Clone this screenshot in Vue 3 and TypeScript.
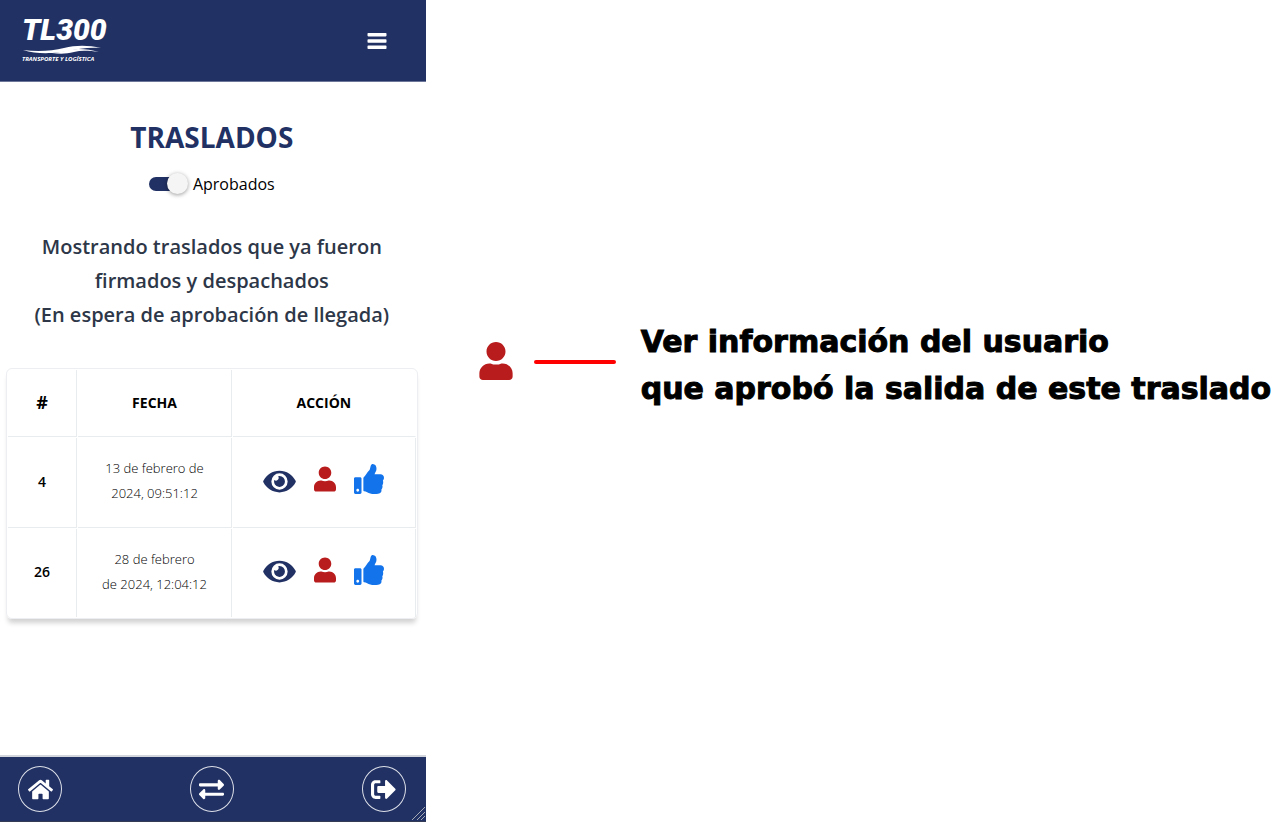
<script setup lang="ts">
interface Transfer {
  id: number
  date: string[]
}

interface NavItem {
  label: string
  viewBox: string
  path: string
}

const transfers: Transfer[] = [
  { id: 4, date: ['13 de febrero de', '2024, 09:51:12'] },
  { id: 26, date: ['28 de febrero', 'de 2024, 12:04:12'] },
]

const eyePath =
  'M572.52 241.4C518.29 135.59 410.93 64 288 64S57.68 135.64 3.48 241.41a32.35 32.35 0 0 0 0 29.19C57.71 376.41 165.07 448 288 448s230.32-71.64 284.52-177.41a32.35 32.35 0 0 0 0-29.19zM288 400a144 144 0 1 1 144-144 143.93 143.93 0 0 1-144 144zm0-240a95.31 95.31 0 0 0-25.31 3.79 47.85 47.85 0 0 1-66.9 66.9A95.78 95.78 0 1 0 288 160z'
const userPath =
  'M224 256c70.7 0 128-57.3 128-128S294.7 0 224 0 96 57.3 96 128s57.3 128 128 128zm89.6 32h-16.7c-22.2 10.2-46.9 16-72.9 16s-50.6-5.8-72.9-16h-16.7C60.2 288 0 348.2 0 422.4V464c0 26.5 21.5 48 48 48h352c26.5 0 48-21.5 48-48v-41.6c0-74.2-60.2-134.4-134.4-134.4z'
const thumbPath =
  'M104 224H24c-13.255 0-24 10.745-24 24v240c0 13.255 10.745 24 24 24h80c13.255 0 24-10.745 24-24V248c0-13.255-10.745-24-24-24zM64 472c-13.255 0-24-10.745-24-24s10.745-24 24-24 24 10.745 24 24-10.745 24-24 24zM384 81.452c0 42.416-25.97 66.208-33.277 94.548h101.723c33.397 0 59.397 27.746 59.553 58.098.084 17.938-7.546 37.249-19.439 49.197l-.11.11c9.836 23.337 8.237 56.037-9.308 79.469 8.681 25.895-.069 57.704-16.382 74.757 4.298 17.598 2.244 32.575-6.148 44.632C440.202 511.587 389.616 512 346.839 512l-2.845-.001c-48.287-.017-87.806-17.598-119.56-31.725-15.957-7.099-36.821-15.887-52.651-16.178-6.54-.12-11.783-5.457-11.783-11.998v-213.77c0-3.2 1.282-6.271 3.558-8.521 39.614-39.144 56.648-80.587 89.117-113.111 14.804-14.832 20.188-37.236 25.393-58.902C282.515 39.293 291.817 0 312 0c24 0 72 8 72 81.452z'

const navItems: NavItem[] = [
  {
    label: 'Inicio',
    viewBox: '0 0 576 512',
    path: 'M280.37 148.26L96 300.11V464a16 16 0 0 0 16 16l112.06-.29a16 16 0 0 0 15.92-16V368a16 16 0 0 1 16-16h64a16 16 0 0 1 16 16v95.64a16 16 0 0 0 16 16.05L464 480a16 16 0 0 0 16-16V300L295.67 148.26a12.19 12.19 0 0 0-15.3 0zM571.6 251.47L488 182.56V44.05a12 12 0 0 0-12-12h-56a12 12 0 0 0-12 12v72.61L318.47 43a48 48 0 0 0-61 0L4.34 251.47a12 12 0 0 0-1.6 16.9l25.5 31A12 12 0 0 0 45.15 301l235.22-193.74a12.19 12.19 0 0 1 15.3 0L530.9 301a12 12 0 0 0 16.9-1.6l25.5-31a12 12 0 0 0-1.7-16.93z',
  },
  {
    label: 'Traslados',
    viewBox: '0 0 512 512',
    path: 'M0 168v-16c0-13.255 10.745-24 24-24h360V80c0-21.367 25.899-32.042 40.971-16.971l80 80c9.372 9.373 9.372 24.569 0 33.941l-80 80C409.956 271.982 384 261.456 384 240v-48H24c-13.255 0-24-10.745-24-24zm488 152H128v-48c0-21.314-25.862-32.08-40.971-16.971l-80 80c-9.372 9.373-9.372 24.569 0 33.941l80 80C102.057 463.997 128 453.437 128 432v-48h360c13.255 0 24-10.745 24-24v-16c0-13.255-10.745-24-24-24z',
  },
  {
    label: 'Salir',
    viewBox: '0 0 512 512',
    path: 'M497 273L329 441c-15 15-41 4.5-41-17v-96H152c-13.3 0-24-10.7-24-24v-96c0-13.3 10.7-24 24-24h136V88c0-21.4 25.9-32 41-17l168 168c9.3 9.4 9.3 24.6 0 34zM192 436v-40c0-6.6-5.4-12-12-12H96c-17.7 0-32-14.3-32-32V160c0-17.7 14.3-32 32-32h84c6.6 0 12-5.4 12-12V76c0-6.6-5.4-12-12-12H96c-53 0-96 43-96 96v192c0 53 43 96 96 96h84c6.6 0 12-5.4 12-12z',
  },
]
</script>

<template>
  <div class="page">
    <section class="app">
      <header class="topbar">
        <a href="#" class="brand">
          <span class="brand-name">TL300</span>
          <svg class="brand-wave" viewBox="0 0 80 9" aria-hidden="true">
            <path d="M1 5C16 7 30 6 42 3S66 0 79 3C66 2 56 4 46 6S16 10 1 5z" />
            <path d="M30 8C42 7 48 4 56 4S70 5 77 7C68 6 60 5 52 7S38 9 30 8z" />
          </svg>
          <span class="brand-tag">TRANSPORTE Y LOGÍSTICA</span>
        </a>
        <button class="menu" type="button" aria-label="Menú">
          <svg viewBox="0 0 20 18" aria-hidden="true">
            <rect x="0.5" y="1" width="19" height="3.4" rx="0.8" />
            <rect x="0.5" y="7.3" width="19" height="3.4" rx="0.8" />
            <rect x="0.5" y="13.6" width="19" height="3.4" rx="0.8" />
          </svg>
        </button>
      </header>

      <main class="content">
        <h1>TRASLADOS</h1>
        <label class="toggle">
          <input type="checkbox" checked />
          <span>Aprobados</span>
        </label>
        <h2>
          Mostrando traslados que ya fueron<br />
          firmados y despachados<br />
          (En espera de aprobación de llegada)
        </h2>

        <table>
          <thead>
            <tr>
              <th class="col-id" scope="col">#</th>
              <th class="col-date" scope="col">FECHA</th>
              <th scope="col">ACCIÓN</th>
            </tr>
          </thead>
          <tbody>
            <tr v-for="transfer in transfers" :key="transfer.id">
              <th class="number" scope="row">{{ transfer.id }}</th>
              <td class="date">
                <span v-for="line in transfer.date" :key="line">{{ line }}</span>
              </td>
              <td class="actions">
                <div class="action-row">
                  <button class="eye" type="button" aria-label="Ver traslado">
                    <svg viewBox="0 0 576 512" aria-hidden="true"><path :d="eyePath" /></svg>
                  </button>
                  <button class="user" type="button" aria-label="Ver usuario">
                    <svg viewBox="0 0 448 512" aria-hidden="true"><path :d="userPath" /></svg>
                  </button>
                  <button class="thumb" type="button" aria-label="Aprobar llegada">
                    <svg viewBox="0 0 512 512" aria-hidden="true"><path :d="thumbPath" /></svg>
                  </button>
                </div>
              </td>
            </tr>
          </tbody>
        </table>
      </main>

      <footer class="bottombar">
        <nav>
          <a v-for="item in navItems" :key="item.label" href="#" :aria-label="item.label">
            <svg :viewBox="item.viewBox" aria-hidden="true"><path :d="item.path" /></svg>
          </a>
        </nav>
        <svg class="grip" viewBox="0 0 14 14" aria-hidden="true">
          <path d="M0 13L13 0M5 13L13 5M9 13L13 9" />
        </svg>
      </footer>
    </section>

    <aside class="note">
      <svg class="note-user" viewBox="0 0 448 512" aria-hidden="true"><path :d="userPath" /></svg>
      <span class="note-line"></span>
      <p>Ver información del usuario<br />que aprobó la salida de este traslado</p>
    </aside>
  </div>
</template>

<style>
body {
  margin: 0;
  background: #fff;
}
</style>

<style scoped>
.page {
  display: grid;
  grid-template-columns: minmax(0, 1fr) minmax(0, 2fr);
  min-height: 100vh;
  font-family: 'Open Sans', 'Noto Sans', sans-serif;
  color: #000;
}

.app {
  display: flex;
  flex-direction: column;
  min-height: 100vh;
}

button {
  padding: 0;
  border: 0;
  background: none;
  cursor: pointer;
}

svg {
  display: block;
  fill: currentColor;
}

.topbar {
  display: flex;
  align-items: center;
  justify-content: space-between;
  box-sizing: border-box;
  height: 82px;
  padding: 0 39px 0 22px;
  border-bottom: 1px solid #6b7698;
  background: #213164;
  color: #fff;
}

.brand {
  display: flex;
  flex-direction: column;
  height: 52px;
  color: #fff;
  text-decoration: none;
  font-family: Roboto, sans-serif;
  font-style: italic;
}

.brand-name {
  font-size: 30px;
  font-weight: 900;
  line-height: 30px;
}

.brand-wave {
  width: 80px;
  height: 9px;
}

.brand-tag {
  font-family: 'Open Sans', sans-serif;
  font-size: 6px;
  font-weight: 700;
  line-height: 10px;
}

.menu {
  color: #fff;
}

.menu svg {
  width: 20px;
  height: 18px;
}

.content {
  flex: 1;
  display: flex;
  flex-direction: column;
  align-items: center;
  padding: 34px 8px 32px 6px;
}

h1 {
  margin: 0;
  font-size: 28px;
  font-weight: 700;
  line-height: 42px;
  color: #213164;
}

.toggle {
  display: flex;
  align-items: center;
  gap: 11px;
  margin-top: 14px;
  font-size: 16px;
  line-height: 24px;
}

.toggle input {
  appearance: none;
  position: relative;
  width: 33px;
  height: 14px;
  margin: 0;
  border-radius: 7px;
  background: #213164;
}

.toggle input::after {
  content: '';
  position: absolute;
  top: -4px;
  right: -6px;
  width: 21px;
  height: 21px;
  border-radius: 50%;
  background: #f5f5f5;
  box-shadow: 0 1px 4px rgba(0, 0, 0, 0.4);
}

h2 {
  margin: 34px 0 0;
  font-size: 20px;
  font-weight: 600;
  line-height: 34px;
  text-align: center;
  white-space: nowrap;
  color: #2d3748;
}

table {
  width: 100%;
  margin-top: 36px;
  border: 1px solid #eceef1;
  border-radius: 6px;
  border-spacing: 1px;
  table-layout: fixed;
  text-align: center;
  box-shadow: 0 6px 5px -2px rgba(0, 0, 0, 0.18);
}

th,
td {
  box-sizing: border-box;
  padding: 0;
  border-right: 1px solid #e9ecef;
  border-bottom: 1px solid #e9ecef;
}

thead th {
  height: 67px;
  padding-bottom: 2px;
  font-size: 14px;
  font-weight: 700;
}

thead th:last-child {
  border-right-color: transparent;
}

tbody tr:last-child > * {
  height: 88px;
  border-bottom: 0;
}

thead .col-id {
  width: 17%;
  font-size: 18px;
}

.col-date {
  width: 38%;
}

tbody th,
tbody td {
  height: 90px;
  padding-bottom: 3px;
}

.number {
  font-size: 14px;
  font-weight: 600;
}

.date {
  font-size: 13px;
  font-weight: 300;
  line-height: 25px;
}

.date span {
  display: block;
  white-space: nowrap;
}

tbody .actions {
  padding-bottom: 7px;
}

.action-row {
  display: flex;
  justify-content: center;
  align-items: center;
  gap: 18px;
}

.eye {
  padding-top: 4px;
  color: #213164;
}

.eye svg {
  width: 33px;
  height: 29px;
}

.user {
  color: #b91c1c;
}

.user svg {
  width: 22px;
  height: 26px;
}

.thumb {
  color: #1273eb;
}

.thumb svg {
  width: 30px;
  height: 30px;
}

.bottombar {
  position: relative;
  box-sizing: border-box;
  height: 67px;
  border-top: 2px solid #d3d6dc;
  border-bottom: 1px solid #343c55;
  background: #213164;
}

nav {
  display: flex;
  justify-content: space-between;
  padding: 9px 20px 9px 18px;
}

nav a {
  display: flex;
  align-items: center;
  justify-content: center;
  box-sizing: border-box;
  width: 44px;
  height: 46px;
  border: 1px solid #dde0e8;
  border-radius: 50%;
  color: #fff;
}

nav svg {
  width: 25px;
  height: 25px;
}

.grip {
  position: absolute;
  right: 0;
  bottom: 0;
  width: 14px;
  height: 14px;
  fill: none;
  stroke: #a5a9b3;
}

.note {
  display: flex;
  align-items: flex-start;
  align-self: start;
  padding: 318px 0 0 53px;
}

.note-user {
  flex: none;
  width: 34px;
  height: 38px;
  margin-top: 24px;
  color: #b91c1c;
}

.note-line {
  flex: none;
  width: 82px;
  height: 4px;
  margin: 42px 25px 0 21px;
  border-radius: 2px;
  background: #f00;
}

.note p {
  margin: 0;
  font-family: 'DejaVu Sans', sans-serif;
  font-size: 30px;
  font-weight: 700;
  line-height: 47px;
  white-space: nowrap;
  -webkit-text-stroke: 1px #000;
}
</style>
